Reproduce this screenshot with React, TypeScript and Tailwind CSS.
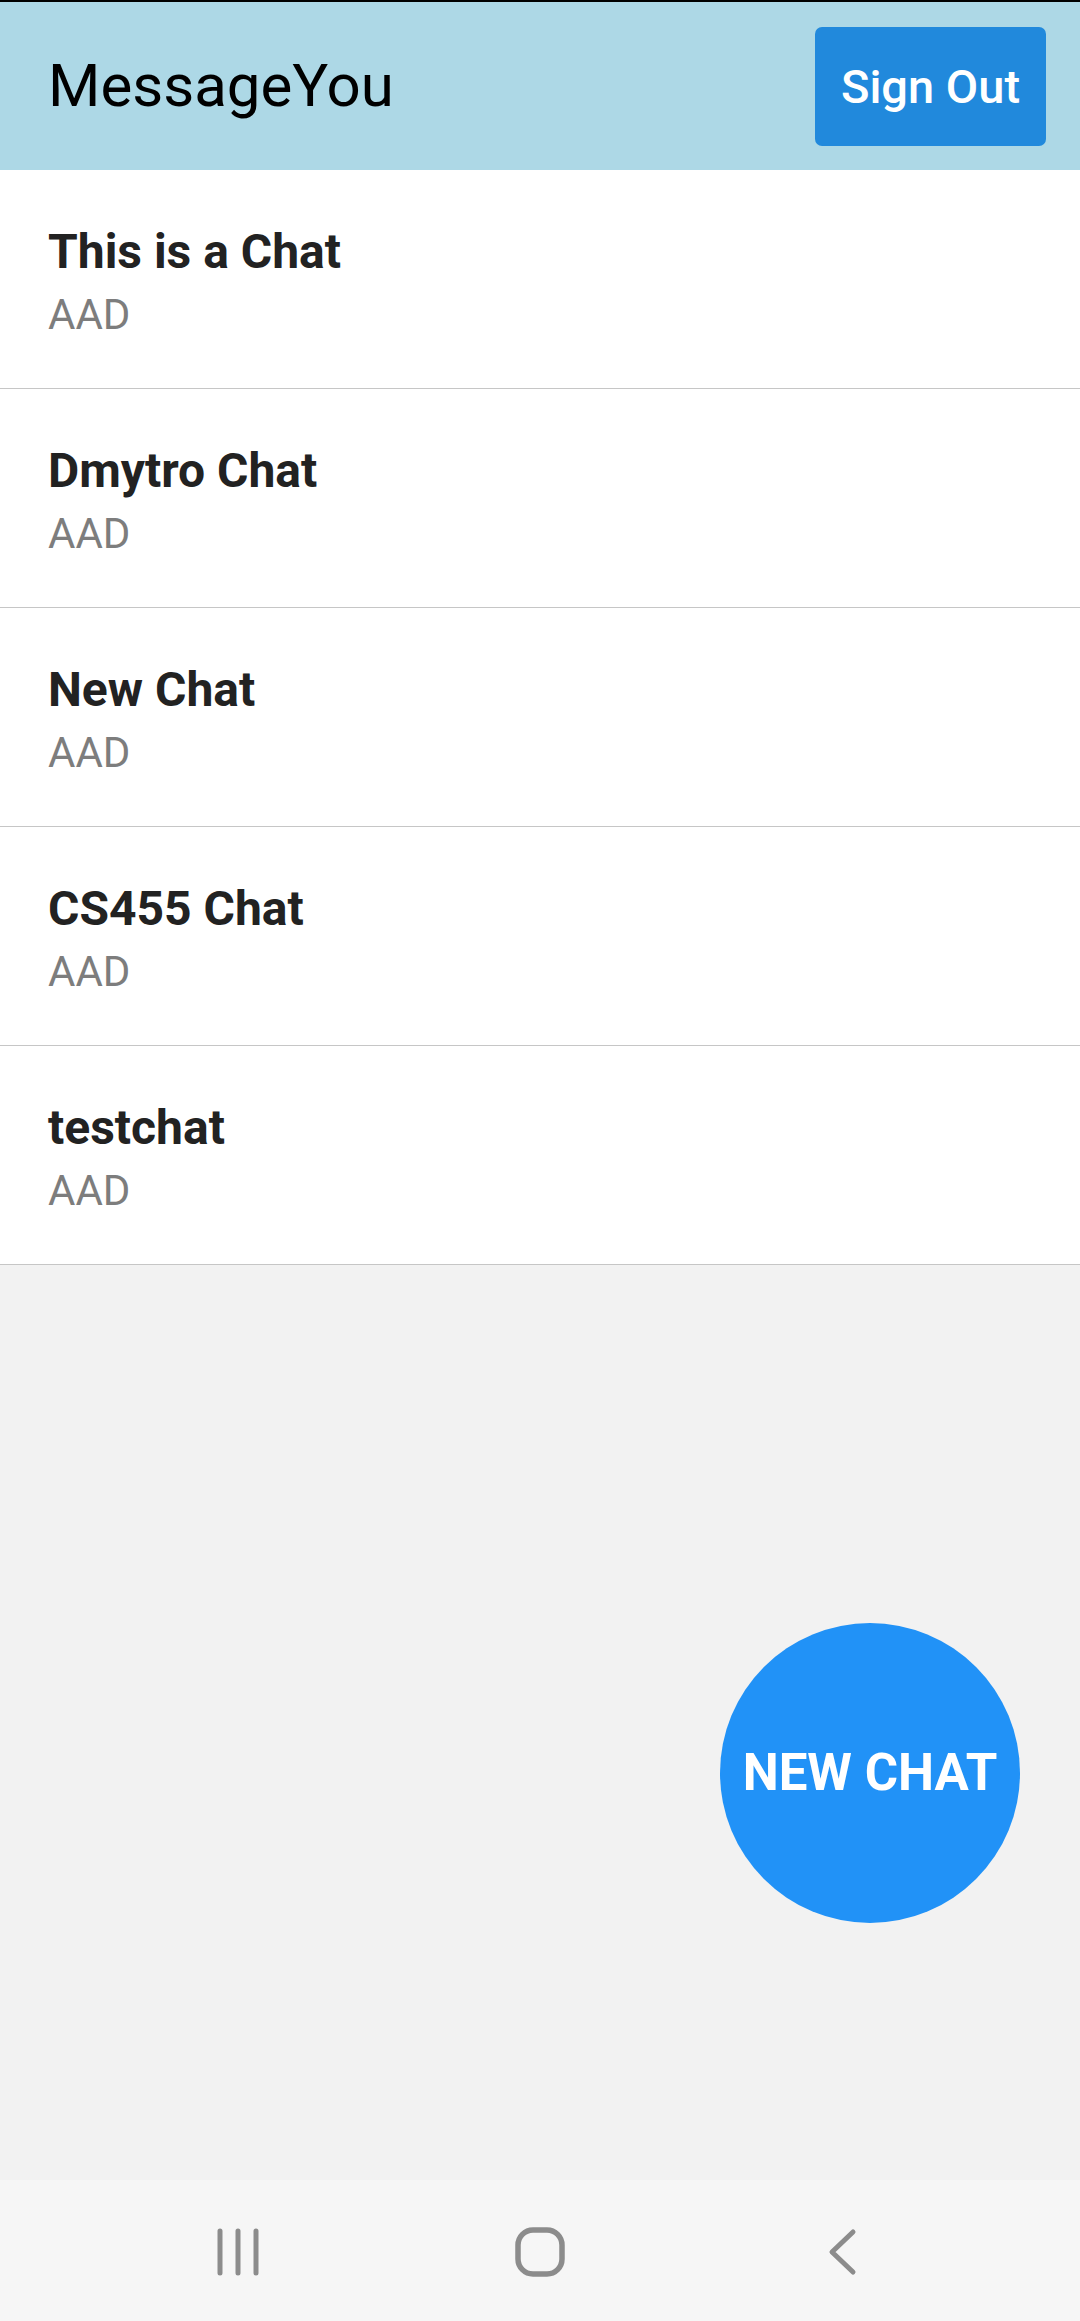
const chats = [
  { name: "This is a Chat", owner: "AAD" },
  { name: "Dmytro Chat", owner: "AAD" },
  { name: "New Chat", owner: "AAD" },
  { name: "CS455 Chat", owner: "AAD" },
  { name: "testchat", owner: "AAD" },
]

const ChatRow = ({ name, owner }: { name: string; owner: string }) => (
  <div className="bg-white border-b border-[#c6c6c6] pl-[48px] pt-[54px] pb-[49px]">
    <div className="text-[48px] leading-[56px] font-bold text-[#222222]">{name}</div>
    <div className="mt-[10px] text-[42px] leading-[49px] text-[#7d7d7d]">{owner}</div>
  </div>
)

const NavBar = () => (
  <div className="h-[141px] bg-[#f6f6f6] flex justify-center items-center pt-[3px]">
    <div className="w-[302px] flex justify-center">
      <svg width="44" height="48" viewBox="0 0 44 48" fill="none" stroke="#8c8c8c" strokeWidth="5" strokeLinecap="round">
        <path d="M4 3v42M22 3v42M40 3v42" />
      </svg>
    </div>
    <div className="w-[302px] flex justify-center">
      <svg width="50" height="50" viewBox="0 0 50 50" fill="none" stroke="#8c8c8c" strokeWidth="5.5">
        <rect x="3" y="3" width="44" height="44" rx="15" />
      </svg>
    </div>
    <div className="w-[302px] flex justify-center">
      <svg width="30" height="48" viewBox="0 0 30 48" fill="none" stroke="#8c8c8c" strokeWidth="5" strokeLinecap="round" strokeLinejoin="round">
        <path d="M26 4L5 24l21 20" />
      </svg>
    </div>
  </div>
)

export default function App() {
  return (
    <div className="min-h-[2321px] flex flex-col bg-[#f2f2f2]" style={{ fontFamily: "Roboto, 'Noto Sans', sans-serif" }}>
      <div className="h-[2px] bg-black" />
      <header className="h-[168px] bg-[#add8e6] flex items-center justify-between pl-[48px] pr-[34px]">
        <h1 className="text-[60px] leading-none text-black">MessageYou</h1>
        <button className="h-[119px] w-[231px] rounded-[7px] bg-[#2189dc] text-white text-[47px] font-medium flex items-center justify-center pt-[2px]">
          Sign Out
        </button>
      </header>

      <div className="flex flex-col">
        {chats.map((c) => (
          <ChatRow key={c.name} name={c.name} owner={c.owner} />
        ))}
      </div>

      <div className="flex-1 flex flex-col justify-end items-end pr-[60px] pb-[257px]">
        <button className="w-[300px] h-[300px] rounded-full bg-[#2192f7] text-white text-[51px] font-bold flex items-center justify-center">
          NEW CHAT
        </button>
      </div>

      <NavBar />
    </div>
  )
}
